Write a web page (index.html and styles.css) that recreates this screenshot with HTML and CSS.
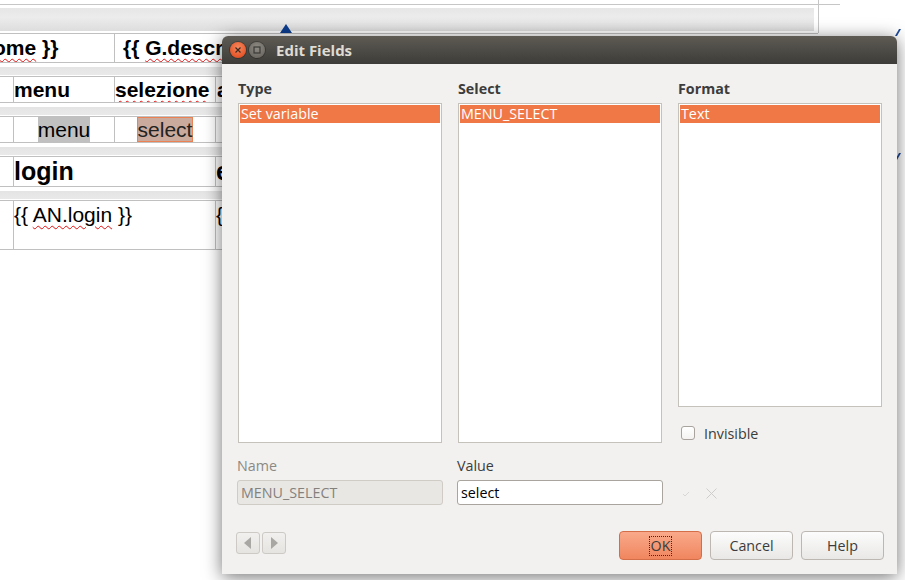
FILE: index.html
```html
<!DOCTYPE html>
<html>
<head>
<meta charset="utf-8">
<title>Edit Fields</title>
<link rel="stylesheet" href="styles.css">
</head>
<body>
<div class="page">
  <div class="doc">
    <div class="head">
      <div class="head-main">
        <div class="band-big"><span class="marker"></span></div>
      </div>
      <div class="head-side"></div>
    </div>

    <div class="tbl t-r1">
      <div class="cell c1"><span class="sq">ome</span> }}</div>
      <div class="cell c2">{{ <span class="sq">G.descrizione</span> }}</div>
    </div>
    <div class="sep"><div class="band"></div></div>

    <div class="tbl t-r2">
      <div class="cell"></div>
      <div class="cell b">menu</div>
      <div class="cell b"><span class="sq">selezione</span></div>
      <div class="cell b pl">attiva</div>
    </div>
    <div class="sep"><div class="band"></div></div>

    <div class="tbl t-r3">
      <div class="cell"></div>
      <div class="cell ctr"><span class="hl">menu</span></div>
      <div class="cell ctr"><span class="fld">select</span></div>
      <div class="cell"></div>
    </div>
    <div class="sep"><div class="band"></div></div>

    <div class="tbl t-r4">
      <div class="cell"></div>
      <div class="cell big">login</div>
      <div class="cell big">email</div>
    </div>
    <div class="sep"><div class="band"></div></div>

    <div class="tbl t-r5">
      <div class="cell"></div>
      <div class="cell">{{ <span class="sq">AN.login</span> }}</div>
      <div class="cell">{{ AN.email }}</div>
    </div>
  </div>

  <span class="edge-mark m1"></span>
  <span class="edge-mark m2"></span>

  <div class="dialog">
    <div class="titlebar">
      <span class="wbtn close">
        <svg width="8" height="8" viewBox="0 0 8 8"><path d="M1.5 1.5 L6.5 6.5 M6.5 1.5 L1.5 6.5" stroke="#3a2a22" stroke-width="1.2" fill="none"/></svg>
      </span>
      <span class="wbtn max">
        <svg width="8" height="8" viewBox="0 0 8 8"><rect x="1" y="1" width="6" height="6" stroke="#3b3a36" stroke-width="1.2" fill="none"/></svg>
      </span>
      <span class="title">Edit Fields</span>
    </div>
    <div class="dlg-body">
      <div class="cols">
        <div class="col">
          <div class="lbl">Type</div>
          <div class="list"><div class="sel">Set variable</div></div>
        </div>
        <div class="col">
          <div class="lbl">Select</div>
          <div class="list"><div class="sel">MENU_SELECT</div></div>
        </div>
        <div class="col">
          <div class="lbl">Format</div>
          <div class="list short"><div class="sel">Text</div></div>
          <label class="check"><span class="box"></span>Invisible</label>
        </div>
      </div>
      <div class="fields">
        <div class="field">
          <div class="lbl2 dis">Name</div>
          <div class="input dis">MENU_SELECT</div>
        </div>
        <div class="field">
          <div class="lbl2">Value</div>
          <div class="input">select</div>
        </div>
        <div class="field icons">
          <svg width="8" height="6" viewBox="0 0 8 6"><path d="M1 3 L3 5 L7 1" stroke="#d9d7d4" stroke-width="1" fill="none"/></svg>
          <svg width="11" height="11" viewBox="0 0 11 11"><path d="M0.5 0.5 L10.5 10.5 M10.5 0.5 L0.5 10.5" stroke="#cfcdca" stroke-width="1" fill="none"/></svg>
        </div>
      </div>
      <div class="footer">
        <div class="nav">
          <span class="navbtn"><svg width="8" height="12" viewBox="0 0 8 12"><path d="M7 0 L7 12 L0 6 Z" fill="#a9a7a4"/></svg></span>
          <span class="navbtn"><svg width="8" height="12" viewBox="0 0 8 12"><path d="M1 0 L1 12 L8 6 Z" fill="#a9a7a4"/></svg></span>
        </div>
        <div class="btns">
          <span class="btn ok"><span class="focus">OK</span></span>
          <span class="btn">Cancel</span>
          <span class="btn">Help</span>
        </div>
      </div>
    </div>
  </div>
</div>
</body>
</html>
```

FILE: styles.css
```css
html, body {
  margin: 0;
  padding: 0;
  background: #ffffff;
}
.page {
  position: relative;
  width: 905px;
  height: 580px;
  overflow: hidden;
  background: #ffffff;
}

/* ---------- background document ---------- */
.doc {
  width: 840px;
  font-family: "Liberation Sans", Arial, sans-serif;
  font-size: 21px;
  color: #000;
}
.head {
  display: flex;
  height: 33px;
}
.head-main {
  width: 818px;
  padding-top: 4px;
  box-sizing: border-box;
}
.head-main::before {
  content: "";
  display: block;
  border-top: 1px solid #c6c6c6;
}
.band-big {
  margin-top: 3px;
  width: 814px;
  height: 23px;
  background: linear-gradient(#e6e6e6, #ececec 40%, #dddddd);
  display: flex;
  align-items: flex-end;
}
.marker {
  margin-left: 280px;
  width: 0;
  height: 0;
  border-left: 6px solid transparent;
  border-right: 6px solid transparent;
  border-bottom: 9px solid #0c3d8f;
  margin-bottom: -2px;
}
.head-side {
  width: 22px;
  border-left: 1px solid #c6c6c6;
  padding-top: 4px;
  box-sizing: border-box;
}
.head-side::before {
  content: "";
  display: block;
  border-top: 1px solid #c6c6c6;
}

.tbl {
  display: grid;
  box-sizing: border-box;
  width: 818px;
  border-top: 1px solid #c0c0c0;
  border-bottom: 1px solid #c0c0c0;
}
.cell {
  box-sizing: border-box;
  border-right: 1px solid #c0c0c0;
  white-space: nowrap;
  overflow: hidden;
}
.cell:last-child { border-right: none; }
.t-r1 { grid-template-columns: 115px 1fr; height: 30px; }
.t-r1 .cell { font-weight: bold; line-height: 28px; }
.t-r1 .c1 { text-indent: -7px; }
.t-r1 .c2 { padding-left: 8px; }
.t-r2 { grid-template-columns: 14px 101px 101px 1fr; height: 27px; }
.t-r2 .cell { line-height: 25px; }
.b { font-weight: bold; }
.pl { padding-left: 1px; }
.t-r3 { grid-template-columns: 14px 101px 101px 1fr; height: 27px; }
.t-r3 .cell { line-height: 25px; }
.ctr { text-align: center; }
.hl { background: #c0c0c0; display: inline-block; line-height: 25px; }
.fld {
  display: inline-block;
  background: #c9aa9d;
  box-shadow: inset 0 0 0 1px #ec8154;
  line-height: 25px;
  padding: 0 1px;
  color: #222;
}
.t-r4 { grid-template-columns: 14px 202px 1fr; height: 31px; }
.big { font-weight: bold; font-size: 25px; line-height: 29px; }
.t-r5 { grid-template-columns: 14px 202px 1fr; height: 50px; }
.t-r5 .cell { line-height: 28px; }
.sq {
  text-decoration: underline wavy #e01010;
  text-decoration-thickness: 1px;
  text-underline-offset: 3px;
}
.sep {
  padding: 4px 0 1px;
}
.band {
  width: 818px;
  height: 8px;
  background: linear-gradient(#e4e4e4, #e9e9e9);
}

.edge-mark {
  position: absolute;
  left: 897px;
  width: 2px;
  height: 7px;
  background: #1d4a9a;
  transform: skewX(-30deg);
}
.m1 { top: 29px; }
.m2 { top: 153px; }

/* ---------- dialog ---------- */
.dialog {
  position: absolute;
  left: 222px;
  top: 36px;
  width: 675px;
  height: 538px;
  background: #f2f1f0;
  border-radius: 6px 6px 0 0;
  box-shadow: 0 3px 18px rgba(0, 0, 0, 0.55);
  font-family: "Open Sans", "Noto Sans", sans-serif;
  font-size: 14.3px;
  color: #3c3c3c;
  display: flex;
  flex-direction: column;
}
.titlebar {
  height: 28px;
  border-radius: 6px 6px 0 0;
  background: linear-gradient(#5e5b54, #3d3c38);
  display: flex;
  align-items: center;
  padding-left: 8px;
  flex: none;
}
.wbtn {
  width: 16px;
  height: 16px;
  border-radius: 50%;
  display: flex;
  align-items: center;
  justify-content: center;
  margin-right: 3px;
}
.close {
  background: radial-gradient(circle at 50% 35%, #f58a5e, #e5562a 70%, #b7401d);
  box-shadow: 0 0 0 1px rgba(0,0,0,0.25);
}
.max {
  background: radial-gradient(circle at 50% 35%, #8f8c86, #6f6c66 70%, #55534e);
  box-shadow: 0 0 0 1px rgba(0,0,0,0.25);
}
.title {
  margin-left: 8px;
  font-weight: bold;
  color: #dfdbd2;
  font-size: 15px;
  line-height: 20px;
}
.dlg-body {
  padding: 14px 15px 14px 16px;
  display: flex;
  flex-direction: column;
  flex: 1;
}
.cols {
  display: grid;
  grid-template-columns: 204px 204px 204px;
  column-gap: 16px;
}
.lbl {
  font-weight: bold;
  height: 22px;
  line-height: 22px;
  margin-bottom: 3px;
}
.list {
  box-sizing: border-box;
  height: 340px;
  background: #fff;
  border: 1px solid #c5c1bb;
  padding: 1px;
}
.list.short { height: 304px; }
.sel {
  background: #f07746;
  color: #fff;
  height: 18px;
  line-height: 18px;
  padding-left: 1px;
}
.check {
  display: flex;
  align-items: center;
  margin-top: 18px;
  padding-left: 3px;
  height: 16px;
}
.box {
  width: 12px;
  height: 12px;
  border: 1px solid #a8a39c;
  border-radius: 3px;
  background: linear-gradient(#ffffff, #f4f3f2);
  margin-right: 9px;
}
.fields {
  display: grid;
  grid-template-columns: 205px 204px 204px;
  column-gap: 15px;
  margin-top: 13px;
}
.field:first-child { margin-left: -1px; }
.field:nth-child(2) { margin-left: -1px; }
.lbl2 {
  height: 20px;
  line-height: 20px;
  margin-bottom: 4px;
}
.dis { color: #8c8984; }
.input {
  box-sizing: border-box;
  height: 25px;
  border: 1px solid #a9a49d;
  border-radius: 3px;
  background: #fff;
  line-height: 23px;
  padding-left: 3px;
  color: #000;
  width: 206px;
}
.input.dis {
  background: #e9e7e4;
  border-color: #cfcbc5;
  color: #84817c;
}
.icons {
  display: flex;
  align-items: center;
  padding-top: 25px;
  height: 25px;
  gap: 16px;
  padding-left: 5px;
}
.footer {
  display: flex;
  justify-content: space-between;
  align-items: flex-start;
  margin-top: auto;
}
.nav {
  display: flex;
  gap: 2px;
  margin-left: -2px;
  margin-top: 1px;
}
.navbtn {
  box-sizing: border-box;
  width: 24px;
  height: 22px;
  border: 1px solid #cdc9c4;
  border-radius: 3px;
  background: linear-gradient(#f1f0ee, #e6e4e1);
  display: flex;
  align-items: center;
  justify-content: center;
}
.btns {
  display: flex;
  gap: 8px;
  margin-right: -2px;
}
.btn {
  box-sizing: border-box;
  width: 83px;
  height: 29px;
  border: 1px solid #bcb7b1;
  border-radius: 4px;
  background: linear-gradient(#fcfcfc, #e9e8e6);
  display: flex;
  align-items: center;
  justify-content: center;
  color: #3c3c3c;
}
.btn.ok {
  background: linear-gradient(#f9a98a, #f0865f);
  border-color: #d46e48;
}
.focus {
  outline: 1px dotted #2f2f2f;
  outline-offset: 0;
  line-height: 18px;
  padding: 0 1px;
}
```
